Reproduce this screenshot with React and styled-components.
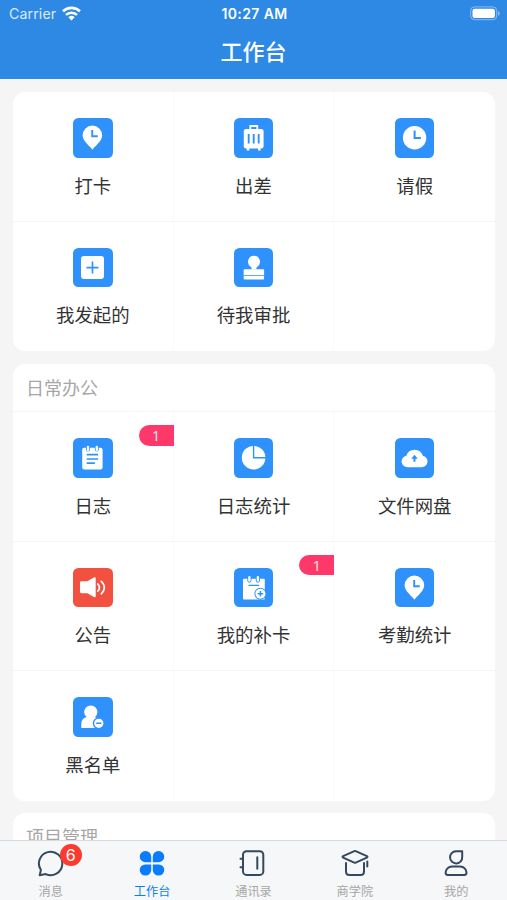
import React from 'react';
import styled, { createGlobalStyle } from 'styled-components';

const theme = {
  header: '#2e89e5',
  blue: '#2f92fc',
  red: '#f2513f',
  pink: '#ff386a',
  active: '#0b7dfc',
  dark: '#34495e',
  grey: '#a6a6a6',
  line: '#f5f5f5',
  background: '#f5f5f5',
};

const GlobalStyle = createGlobalStyle`
  * {
    box-sizing: border-box;
  }
  body {
    margin: 0;
    font-family: 'Inter', 'Noto Sans CJK SC', sans-serif;
    background-color: ${theme.background};
  }
`;

const Screen = styled.div`
  display: flex;
  flex-direction: column;
  width: 507px;
  height: 900px;
  overflow: hidden;
  background-color: ${theme.background};
`;

const Header = styled.header`
  flex: none;
  height: 79px;
  color: white;
  background-color: ${theme.header};
`;

const StatusBar = styled.div`
  display: grid;
  grid-template-columns: 1fr auto 1fr;
  align-items: center;
  height: 27px;
  padding: 0 7px 0 9px;
  font-size: 14px;
`;

const Carrier = styled.div`
  display: flex;
  align-items: center;
  gap: 6px;
  color: #dcebfb;
  font-size: 14.2px;
  letter-spacing: 0.1px;
`;

const Clock = styled.div`
  font-size: 14px;
  font-weight: 600;
  letter-spacing: 0.4px;
`;

const Battery = styled.svg`
  justify-self: end;
  display: block;
`;

const PageTitle = styled.h1`
  margin: 0;
  font-size: 22px;
  font-weight: 500;
  line-height: 50px;
  text-align: center;
`;

const Content = styled.main`
  flex: 1;
  display: flex;
  flex-direction: column;
  gap: 12.5px;
  min-height: 0;
  padding: 13px 12px 0 13px;
  overflow: hidden;
`;

const Card = styled.section`
  flex: none;
  overflow: hidden;
  border-radius: 12px;
  background-color: white;
`;

const CardTitle = styled.h2`
  height: 48.5px;
  margin: 0;
  padding-left: 13px;
  border-bottom: 1px solid ${theme.line};
  color: ${theme.grey};
  font-size: 18px;
  font-weight: 400;
  line-height: 50px;
`;

const Grid = styled.div`
  display: grid;
  grid-template-columns: repeat(3, 1fr);
  grid-auto-rows: 129.5px;
`;

const Cell = styled.div`
  position: relative;
  display: flex;
  flex-direction: column;
  align-items: center;
  padding-top: 26.4px;
  border-right: 1px solid #fafafa;
  border-bottom: 1px solid ${theme.line};

  &:nth-child(3n) {
    border-right: none;
  }
  &:nth-last-child(-n + 3) {
    border-bottom: none;
  }
`;

const AppIcon = styled.svg`
  flex: none;
  width: 39.4px;
  height: 39.4px;
  border-radius: 5.5px;
  color: ${({ $color }) => $color || theme.blue};
  background-color: currentColor;
`;

const Label = styled.span`
  margin-top: 14px;
  color: #333;
  font-size: 18.4px;
  line-height: 28px;
`;

const Ribbon = styled.span`
  position: absolute;
  top: 13px;
  right: -1px;
  width: 35px;
  height: 20.5px;
  border-radius: 11px 0 0 11px;
  color: #ffe3ea;
  background-color: ${theme.pink};
  font-family: 'Open Sans', sans-serif;
  font-size: 15px;
  line-height: 20px;
  text-align: center;
`;

const TabBar = styled.nav`
  flex: none;
  display: grid;
  grid-template-columns: repeat(5, 1fr);
  height: 60px;
  border-top: 1px solid #dcdcdc;
  background-color: #f6f7f8;
`;

const Tab = styled.div`
  display: flex;
  flex-direction: column;
  align-items: center;
  padding-top: 8px;
  color: ${({ $active }) => ($active ? theme.active : theme.grey)};
  font-size: 12.2px;
  line-height: 18px;
`;

const TabIcon = styled.div`
  position: relative;
  height: 28px;
  margin-bottom: 6px;

  svg {
    display: block;
  }
`;

const Badge = styled.span`
  position: absolute;
  top: -5px;
  left: 23px;
  width: 22px;
  height: 22px;
  border-radius: 50%;
  color: white;
  background-color: #fd3a30;
  font-size: 16px;
  line-height: 22px;
  text-align: center;
`;

const pin = (
  <>
    <path
      fill="white"
      d="M19.4 31.8C17.6 28.6 9.6 23 9.6 17.4a9.8 9.8 0 0 1 19.6 0c0 5.600-8 11.200-9.800 14.400z"
    />
    <path fill="none" stroke="currentColor" strokeWidth="1.9" d="M19.2 12v6.300h5.600" />
  </>
);

// white glyphs drawn on a 39x39 tile, cut-outs use the tile colour
const glyphs = {
  pin,
  suitcase: (
    <>
      <path fill="none" stroke="white" strokeWidth="1.8" d="M16.300 12V8h7v4" />
      <rect x="9.800" y="11" width="19.800" height="19.500" rx="2.300" fill="white" />
      <path stroke="white" strokeWidth="2.600" d="M14 30v2.400M25.300 30v2.400" />
      <path stroke="currentColor" strokeWidth="1.900" d="M14.700 16v9.600M19.700 16v9.600M24.700 16v9.600" />
    </>
  ),
  clock: (
    <>
      <circle cx="19.600" cy="19.700" r="11.700" fill="white" />
      <path fill="none" stroke="currentColor" strokeWidth="2" d="M19.600 12.500v7.500h6.300" />
    </>
  ),
  plus: (
    <>
      <rect x="8" y="8.100" width="23" height="23" rx="3" fill="white" />
      <path stroke="currentColor" strokeWidth="1.700" d="M19.500 13.600v12M13.500 19.600h12" />
    </>
  ),
  stamp: (
    <>
      <path
        fill="white"
        d="M20 7.700a6 6 0 0 1 3.300 11c-.7.500-1 1.200-1 2.700h-4.600c0-1.500-.3-2.200-1-2.700A6 6 0 0 1 20 7.700z"
      />
      <rect x="9.700" y="21.300" width="20.400" height="10.200" rx=".9" fill="white" />
      <path stroke="currentColor" strokeWidth=".8" d="M9.700 27.600h20.400" />
    </>
  ),
  notes: (
    <>
      <rect x="9.200" y="9.800" width="20.400" height="21.800" rx="2" fill="white" />
      <path stroke="currentColor" strokeWidth="4" strokeLinecap="round" d="M15 9.400v2.200M23.800 9.400v2.200" />
      <path stroke="white" strokeWidth="2.300" strokeLinecap="round" d="M15 9v3M23.800 9v3" />
      <path stroke="currentColor" strokeWidth="1.700" d="M13.700 16.700h11.400M13.700 21h11.400M13.700 25.100h8.200" />
    </>
  ),
  pie: (
    <>
      <circle cx="19.600" cy="19.700" r="11.800" fill="white" />
      <path fill="none" stroke="currentColor" strokeWidth="1.400" d="M19.600 7v12.700h12.400" />
    </>
  ),
  cloud: (
    <>
      <path
        fill="white"
        d="M12.500 29.300a5.800 5.800 0 0 1-1.200-11.500 8.600 8.600 0 0 1 16.500 0 5.800 5.800 0 0 1-1.200 11.500z"
      />
      <path fill="currentColor" d="M19.500 16.700l3.300 4h-2.300v3h-2v-3h-2.300z" />
    </>
  ),
  speaker: (
    <>
      <path
        fill="white"
        d="M8.600 13.300h5.800l6.500-3.800c1-.6 1.800-.3 1.800.8v17.900c0 1.100-.8 1.400-1.800.8l-6.500-3.800H8.600c-1 0-1.600-.6-1.600-1.600v-8.700c0-1 .6-1.600 1.600-1.600z"
      />
      <path
        fill="none"
        stroke="white"
        strokeWidth="1.700"
        strokeLinecap="round"
        d="M24.700 16c2.300 1.800 2.300 5.400 0 7.200M28.300 13.400c4 3.500 4 8.900 0 12.400"
      />
    </>
  ),
  calendar: (
    <>
      <rect x="9" y="10.800" width="21.800" height="20.800" rx="1" fill="white" />
      <path stroke="currentColor" strokeWidth="4.200" strokeLinecap="round" d="M15.400 9.800v2.800M23.900 9.800v2.800" />
      <path stroke="white" strokeWidth="2.400" strokeLinecap="round" d="M15.400 9.300v3.200M23.900 9.300v3.200" />
      <path stroke="currentColor" strokeWidth="1.300" d="M14.600 17.400h10.500" />
      <circle cx="26.400" cy="25.700" r="6" fill="currentColor" />
      <circle cx="26.400" cy="25.700" r="5" fill="white" />
      <path stroke="currentColor" strokeWidth="1.500" d="M26.400 22.900v5.600M23.600 25.700h5.600" />
    </>
  ),
  person: (
    <>
      <path
        fill="white"
        d="M8.300 31v-3.600c0-4 1.700-6.400 5.300-7.300a6.600 6.600 0 1 1 8.400 0l4.500 2.400V31z"
      />
      <circle cx="25.800" cy="26.300" r="6" fill="currentColor" />
      <circle cx="25.800" cy="26.300" r="4.600" fill="white" />
      <path stroke="currentColor" strokeWidth="1.500" d="M23.200 26.300h5.200" />
    </>
  ),
};

const sections = [
  {
    items: [
      { label: '打卡', icon: 'pin' },
      { label: '出差', icon: 'suitcase' },
      { label: '请假', icon: 'clock' },
      { label: '我发起的', icon: 'plus' },
      { label: '待我审批', icon: 'stamp' },
      {},
    ],
  },
  {
    title: '日常办公',
    items: [
      { label: '日志', icon: 'notes', count: 1 },
      { label: '日志统计', icon: 'pie' },
      { label: '文件网盘', icon: 'cloud' },
      { label: '公告', icon: 'speaker', color: theme.red },
      { label: '我的补卡', icon: 'calendar', count: 1 },
      { label: '考勤统计', icon: 'pin' },
      { label: '黑名单', icon: 'person' },
      {},
      {},
    ],
  },
  { title: '项目管理', items: [] },
];

const tabs = [
  {
    label: '消息',
    badge: 6,
    icon: <path d="M2.700 26.200l1.200-5.200A11.700 11.700 0 1 1 8.700 25.100z" />,
  },
  {
    label: '工作台',
    active: true,
    icon: (
      <path
        fill={theme.active}
        stroke="none"
        d="M7.300 2A5.600 5.600 0 0 1 13.200 7.700V13.200H7.300A5.600 5.600 0 0 1 7.300 2zM20.700 2A5.600 5.600 0 0 0 14.800 7.700V13.200H20.700A5.600 5.600 0 0 0 20.700 2zM7.300 26.600A5.600 5.600 0 0 0 13.200 20.900V15.400H7.300A5.600 5.600 0 0 0 7.300 26.600zM20.700 26.600A5.600 5.600 0 0 1 14.800 20.900V15.400H20.700A5.600 5.600 0 0 1 20.700 26.600z"
      />
    ),
  },
  {
    label: '通讯录',
    icon: (
      <>
        <rect x="4" y="2.300" width="20.300" height="23.600" rx="3.500" />
        <path d="M18.300 8.200v11.500M1.500 9.700H4M1.500 18.200H4" />
      </>
    ),
  },
  {
    label: '商学院',
    icon: (
      <>
        <path d="M13.300 2.200q.7-.3 1.400 0l11.200 4.900q1.200.7 0 1.500L14.700 13.700q-.7.300-1.400 0L2.100 8.600q-1.200-.8 0-1.500z" />
        <path d="M5 14v8.400c0 2.100 1.400 3.500 3.500 3.500h11c2.100 0 3.500-1.400 3.500-3.500V14M26.300 12.500v5" />
      </>
    ),
  },
  {
    label: '我的',
    icon: (
      <>
        <path d="M14 2.200h6.200v5.600a6.100 6.100 0 1 1-6.200-5.600z" />
        <path d="M10 17.500h8.200c3.600 0 6.300 3 6.300 6.300 0 1.300-.8 2.100-2.100 2.100H5.700c-1.300 0-2.100-.8-2.100-2.100 0-3.400 2.800-6.300 6.400-6.300z" />
      </>
    ),
  },
];

export default function App() {
  return (
    <Screen>
      <GlobalStyle />
      <Header>
        <StatusBar>
          <Carrier>
            Carrier
            <svg width="19" height="15" viewBox="0 0 19 15" fill="none" stroke="white" strokeWidth="2.600">
              <path d="M1 5.300a12.200 12.200 0 0 1 17 0M4 8.900a8 8 0 0 1 11 0" />
              <path fill="white" stroke="none" d="M9.500 14.500l-3.100-3.200a4.500 4.500 0 0 1 6.200 0z" />
            </svg>
          </Carrier>
          <Clock>10:27 AM</Clock>
          <Battery width="30" height="15" viewBox="0 0 30 15">
            <rect x=".7" y=".9" width="26" height="12.800" rx="3.800" fill="none" stroke="#8dbcf0" />
            <rect x="2.500" y="2.700" width="22.400" height="9.200" rx="2" fill="white" />
            <path fill="#8dbcf0" d="M28 5c2.200.8 2.200 4 0 4.800z" />
          </Battery>
        </StatusBar>
        <PageTitle>工作台</PageTitle>
      </Header>
      <Content>
        {sections.map((section, i) => (
          <Card key={i}>
            {section.title && <CardTitle>{section.title}</CardTitle>}
            <Grid>
              {section.items.map((item, j) => (
                <Cell key={j}>
                  {item.icon && (
                    <AppIcon viewBox="0 0 39.400 39.400" $color={item.color}>
                      {glyphs[item.icon]}
                    </AppIcon>
                  )}
                  {item.label && <Label>{item.label}</Label>}
                  {item.count && <Ribbon>{item.count}</Ribbon>}
                </Cell>
              ))}
            </Grid>
          </Card>
        ))}
      </Content>
      <TabBar>
        {tabs.map((tab) => (
          <Tab key={tab.label} $active={tab.active}>
            <TabIcon>
              <svg
                width="28"
                height="28"
                viewBox="0 0 28 28"
                fill="none"
                stroke={theme.dark}
                strokeWidth="2"
                strokeLinejoin="round"
                strokeLinecap="round"
              >
                {tab.icon}
              </svg>
              {tab.badge && <Badge>{tab.badge}</Badge>}
            </TabIcon>
            {tab.label}
          </Tab>
        ))}
      </TabBar>
    </Screen>
  );
}
